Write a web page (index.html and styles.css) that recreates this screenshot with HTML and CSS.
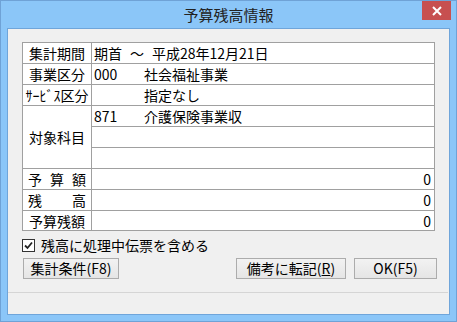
FILE: index.html
```html
<!DOCTYPE html>
<html lang="ja">
<head>
    <meta charset="UTF-8">
    <title>予算残高情報</title>
    <link rel="stylesheet" href="styles.css">
</head>
<body>

    <div class="window">
        <div class="titlebar">
            <span class="title">予算残高情報</span>
            <span class="close-btn">
                <svg width="10" height="10" viewBox="0 0 10 10">
                    <path d="M1 1 L9 9 M9 1 L1 9" stroke="#fff" stroke-width="2" fill="none"/>
                </svg>
            </span>
        </div>

        <div class="client">
            <div class="info-table">
                <div class="lbl">集計期間</div>
                <div class="val">期首<span class="tilde">～</span>平成28年12月21日</div>

                <div class="lbl">事業区分</div>
                <div class="val"><span class="code">000</span>社会福祉事業</div>

                <div class="lbl">ｻｰﾋﾞｽ区分</div>
                <div class="val"><span class="code"></span>指定なし</div>

                <div class="lbl lbl-tall">対象科目</div>
                <div class="val"><span class="code">871</span>介護保険事業収</div>
                <div class="val"></div>
                <div class="val"></div>

                <div class="lbl spread"><span>予</span><span>算</span><span>額</span></div>
                <div class="val num">0</div>

                <div class="lbl spread"><span>残</span><span>高</span></div>
                <div class="val num">0</div>

                <div class="lbl">予算残額</div>
                <div class="val num">0</div>
            </div>

            <label class="check-row">
                <span class="check-box">
                    <svg width="9" height="9" viewBox="0 0 9 9">
                        <path d="M1 4.5 L3.5 7 L8 1.5" stroke="#222" stroke-width="1.8" fill="none"/>
                    </svg>
                </span>
                残高に処理中伝票を含める
            </label>

            <div class="button-row">
                <button class="btn btn-cond">集計条件(F8)</button>
                <button class="btn btn-memo">備考に転記(<u>R</u>)</button>
                <button class="btn btn-ok">OK(F5)</button>
            </div>

            <div class="separator"></div>
        </div>
    </div>

</body>
</html>
```

FILE: styles.css
```css
body {
    margin: 0;
    padding: 0;
    font-family: "Noto Sans CJK JP", "Noto Sans", sans-serif;
    font-size: 14px;
    color: #000;
}

/* window frame */
.window {
    width: 457px;
    height: 322px;
    box-sizing: border-box;
    border: 1px solid #6fa2d6;
    background: #8bc6f8;
    display: flex;
    flex-direction: column;
}

.titlebar {
    position: relative;
    height: 27px;
    display: flex;
    justify-content: center;
    align-items: center;
}

.title {
    font-size: 15px;
    color: #222;
    line-height: 27px;
}

.close-btn {
    position: absolute;
    top: 0;
    right: 5px;
    width: 29px;
    height: 19px;
    background: #c75050;
    display: flex;
    justify-content: center;
    align-items: center;
}

.client {
    flex: 1;
    margin: 0 6px 6px;
    border: 1px solid #6fa5da;
    background: #f0f0f0;
    padding-top: 13px;
}

/* summary table */
.info-table {
    margin-left: 14px;
    width: 413px;
    box-sizing: border-box;
    display: grid;
    grid-template-columns: 68px 342px;
    grid-template-rows: repeat(8, 20px) 19px;
    gap: 1px;
    padding: 1px;
    background: #a0a0a0;
}

.lbl,
.val {
    background: #fff;
    line-height: 20px;
    white-space: nowrap;
}

.lbl {
    text-align: center;
}

.lbl-tall {
    grid-row: span 3;
    display: flex;
    justify-content: center;
    align-items: center;
}

.lbl.spread {
    display: flex;
    justify-content: space-between;
    padding: 0 5px;
}

.val {
    padding-left: 2px;
    display: flex;
}

.val .code {
    width: 50px;
    flex-shrink: 0;
}

.tilde {
    margin: 0 8px;
}

.val.num {
    justify-content: flex-end;
    padding-right: 3px;
}

/* checkbox */
.check-row {
    display: flex;
    align-items: center;
    height: 16px;
    margin-top: 6px;
    margin-left: 14px;
    gap: 6px;
}

.check-box {
    width: 11px;
    height: 11px;
    border: 1px solid #333;
    background: #fff;
    display: flex;
    justify-content: center;
    align-items: center;
}

/* buttons */
.button-row {
    display: flex;
    margin-top: 5px;
    padding: 0 12px 0 15px;
    gap: 8px;
}

.btn {
    height: 21px;
    padding: 0;
    border: 1px solid #acacac;
    border-radius: 0;
    background: linear-gradient(#f2f2f2, #e5e5e5);
    font-family: inherit;
    font-size: 14px;
    color: #000;
    line-height: 19px;
}

.btn-cond {
    width: 96px;
    margin-right: auto;
}

.btn-memo {
    width: 110px;
}

.btn-ok {
    width: 83px;
}

.separator {
    margin: 13px 1px 0 0;
    height: 1px;
    background: #d5d5d5;
}
```
